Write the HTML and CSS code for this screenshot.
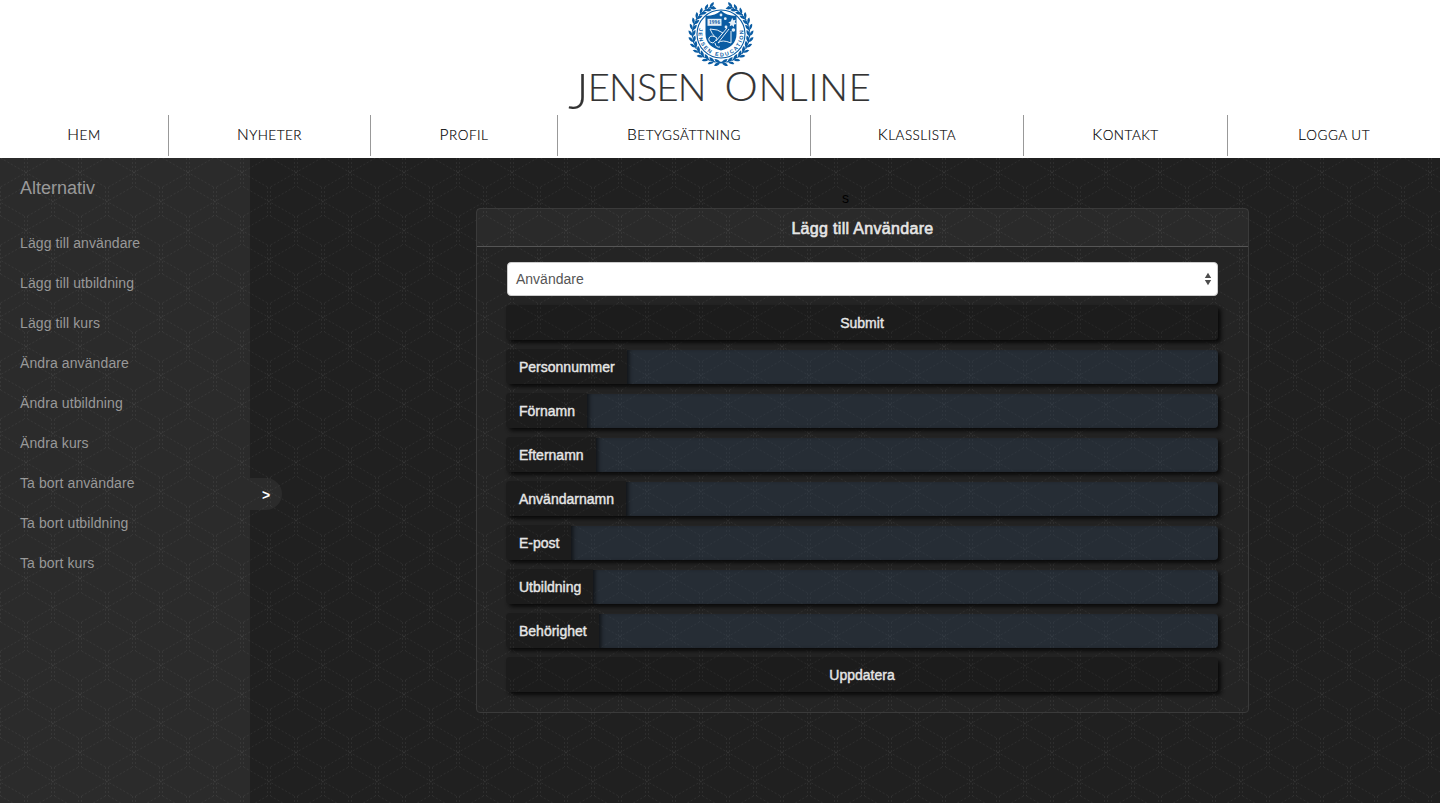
FILE: index.html
```html
<!DOCTYPE html>
<html lang="sv">
<head>
<meta charset="utf-8">
<title>Jensen Online</title>
<link rel="stylesheet" href="styles.css">
</head>
<body>
<header class="top">
  <svg class="logo" viewBox="-33 -33 66 66" width="66" height="66">
    <defs>
      <g id="leaf">
        <path d="M-3 28.6Q1 28 3 28" fill="none" stroke="#0a5ca3" stroke-width="1.3"/>
        <path d="M-1.6 28.6Q-.6 32.2 4 32.5Q3.8 28.8-1.6 28.6Z"/>
        <path d="M-1.6 28.6Q-.4 25 4.4 25.4Q3.4 29-1.6 28.6Z"/>
      </g>
      <g id="branch">
        <use href="#leaf" transform="rotate(-5)"/><use href="#leaf" transform="rotate(-17)"/>
        <use href="#leaf" transform="rotate(-29)"/><use href="#leaf" transform="rotate(-41)"/>
        <use href="#leaf" transform="rotate(-53)"/><use href="#leaf" transform="rotate(-65)"/>
        <use href="#leaf" transform="rotate(-77)"/><use href="#leaf" transform="rotate(-89)"/>
        <use href="#leaf" transform="rotate(-101)"/><use href="#leaf" transform="rotate(-113)"/>
        <use href="#leaf" transform="rotate(-125)"/><use href="#leaf" transform="rotate(-137)"/>
        <use href="#leaf" transform="rotate(-149)"/><use href="#leaf" transform="rotate(-160)"/>
      </g>
      <path id="arc" d="M-21.6-6A22.4 22.4 0 1 0 21.6-6"/>
    </defs>
    <g fill="#0a5ca3">
      <use href="#branch"/>
      <use href="#branch" transform="scale(-1 1)"/>
      <circle r="24" fill="#fff" stroke="#0a5ca3" stroke-width="1.1"/>
      <path d="M0-23.5Q-5-18.5-15.5-18V0C-15.5 9-9 14.5 0 16.5C9 14.5 15.5 9 15.5 0V-18Q5-18.5 0-23.5Z"/>
      <text class="seal"><textPath href="#arc" textLength="80">JENSEN EDUCATION</textPath></text>
    </g>
    <path d="M-13.5-15.2H.5V-8.2H-13.5Z" fill="#e6eff7"/>
    <text class="year" x="-12" y="-9.7" textLength="11">1996</text>
    <g fill="#e6eff7">
      <circle cx="0" cy="-19" r="1.4"/><circle cx="4.3" cy="-15.3" r="1.4"/><circle cx="5" cy="-7" r="1.4"/><circle cx="12.4" cy="-4" r="1.8"/>
      <path d="M11.2-16.2l1.1 2.4 2.5-.5-1 2.3 1.8 1.9-2.5.5-.2 2.5-1.9-1.7-2.3 1 .6-2.5-2-1.5 2.5-.7Z"/>
    </g>
    <g fill="none" stroke="#e6eff7" stroke-width="1">
      <path d="M-11-5Q-3-5 2-1M-11-5Q-9 0-6 3M8-5L-3 9M6-6L-5 7M10-3L10 9Q1 5-3 9"/>
      <path d="M-4 4Q-10 0-12 4Q-13 8-8 9Q-5 7-4 4M-6 9Q-5 14-1 13"/>
    </g>
  </svg>
  <h1 class="brand"><span class="word jensen">Jensen</span><span class="word online">Online</span></h1>
  <nav class="nav">
    <a class="tab"><span class="word">Hem</span></a>
    <a class="tab"><span class="word">Nyheter</span></a>
    <a class="tab"><span class="word">Profil</span></a>
    <a class="tab"><span class="word">Betygsättning</span></a>
    <a class="tab"><span class="word">Klasslista</span></a>
    <a class="tab"><span class="word">Kontakt</span></a>
    <a class="tab"><span class="word">Logga ut</span></a>
  </nav>
</header>
<div class="page">
  <aside class="side">
    <h2 class="side-title">Alternativ</h2>
    <a class="side-link">Lägg till användare</a>
    <a class="side-link">Lägg till utbildning</a>
    <a class="side-link">Lägg till kurs</a>
    <a class="side-link">Ändra användare</a>
    <a class="side-link">Ändra utbildning</a>
    <a class="side-link">Ändra kurs</a>
    <a class="side-link">Ta bort användare</a>
    <a class="side-link">Ta bort utbildning</a>
    <a class="side-link">Ta bort kurs</a>
    <span class="toggle">&gt;</span>
  </aside>
  <main class="main">
    <div class="stray">s</div>
    <section class="panel">
      <h3 class="panel-head">Lägg till Användare</h3>
      <form class="panel-body">
        <div class="select">Användare
          <svg width="8" height="14" viewBox="0 0 8 14"><path d="M4 .8L7.2 6H.8ZM4 13.2L.8 8H7.2Z" fill="#4d4d4d"/></svg>
        </div>
        <div class="button">Submit</div>
        <div class="row"><label class="label">Personnummer</label><div class="field"></div></div>
        <div class="row"><label class="label">Förnamn</label><div class="field"></div></div>
        <div class="row"><label class="label">Efternamn</label><div class="field"></div></div>
        <div class="row"><label class="label">Användarnamn</label><div class="field"></div></div>
        <div class="row"><label class="label">E-post</label><div class="field"></div></div>
        <div class="row"><label class="label">Utbildning</label><div class="field"></div></div>
        <div class="row"><label class="label">Behörighet</label><div class="field"></div></div>
        <div class="button">Uppdatera</div>
      </form>
    </section>
  </main>
</div>
</body>
</html>
```
FILE: styles.css
```css
* { box-sizing: border-box; }
body {
  margin: 0;
  height: 803px;
  overflow: hidden;
  display: flex;
  flex-direction: column;
  font: 14px/20px "Liberation Sans", Arial, sans-serif;
  background-color: #202020;
  background-image: url("data:image/svg+xml,%3Csvg xmlns='http://www.w3.org/2000/svg' width='54' height='58'%3E%3Cg fill='none' stroke='%23fff' stroke-opacity='.058' stroke-dasharray='2 2'%3E%3Cpath d='M25.5 0V29M28.5 0V29M1.5 29V58M52.5 29V58M1.5 0L52.5 29M1.5 29L52.5 0M28.5 29L54 43.5M28.5 58L54 43.5M25.5 29L0 43.5M25.5 58L0 43.5'/%3E%3C/g%3E%3C/svg%3E");
  background-position: 26px 13px;
}
.top {
  height: 158px;
  background: #fff;
  display: flex;
  flex-direction: column;
  align-items: center;
}
.logo { display: block; margin-top: 1px; margin-left: 1px; flex: none; }
.seal { font: bold 5.4px "Liberation Sans", Arial, sans-serif; }
.year { font: bold 5.2px "Liberation Serif", serif; fill: #0a5ca3; }
.word { display: inline-block; text-transform: uppercase; white-space: nowrap; }
.brand {
  margin: 0;
  height: 48px;
  padding-top: 1px;
  display: flex;
  gap: 19px;
  font: 300 38px/37px Lato, sans-serif;
  color: #333;
  -webkit-text-stroke: .2px #333;
}
.brand .word { height: 37px; }
.jensen { letter-spacing: -.8px; }
.online { letter-spacing: .9px; }
.jensen::first-letter { font-size: 49px; line-height: 20px; vertical-align: -8px; }
.online::first-letter { font-size: 42px; line-height: 20px; }
.nav {
  width: 1440px;
  height: 41px;
  display: grid;
  grid-template-columns: 169px 202px 187px 253px 213px 204px 212px;
}
.tab {
  display: flex;
  align-items: center;
  justify-content: center;
  padding-bottom: 2px;
  border-right: 1px solid #999;
  font: 300 13.5px/20px Lato, sans-serif;
  letter-spacing: .5px;
  color: #000;
  -webkit-text-stroke: .15px #000;
}
.tab:last-child { border-right: 0; }
.tab .word::first-letter { font-size: 15.5px; }
.page { flex: 1; display: flex; }
.side {
  position: relative;
  width: 250px;
  padding: 20px;
  display: flex;
  flex-direction: column;
  gap: 20px;
  background: rgba(255, 255, 255, .05);
  color: #999;
}
.side-title { margin: 0 0 15px; font-size: 18px; font-weight: 400; line-height: 20px; }
.side-link { height: 20px; letter-spacing: .1px; }
.toggle {
  position: absolute;
  left: 250px;
  top: 320px;
  width: 32px;
  height: 32px;
  border-radius: 0 16px 16px 0;
  background: rgba(255, 255, 255, .05);
  color: #fff;
  font-weight: 700;
  line-height: 34px;
  text-align: center;
}
.main { flex: 1; padding: 30px 191px 0 226px; }
.stray { height: 20px; padding-left: 366px; color: #000; line-height: 21px; }
.panel {
  height: 505px;
  border: 1px solid #3a3a3a;
  border-radius: 4px;
  background: rgba(255, 255, 255, .02);
}
.panel-head {
  margin: 0;
  height: 38px;
  border-bottom: 1px solid #555;
  background: rgba(255, 255, 255, .03);
  color: #e6e6e6;
  font-size: 16px;
  font-weight: 400;
  letter-spacing: .32px;
  line-height: 39px;
  text-align: center;
  -webkit-text-stroke: .6px #e6e6e6;
}
.panel-body { padding: 15px 29px; display: flex; flex-direction: column; gap: 9px; }
.select {
  height: 34px;
  margin: 0 1px;
  padding: 0 5px 0 8px;
  display: flex;
  align-items: center;
  justify-content: space-between;
  border: 1px solid #ccc;
  border-radius: 4px;
  background: #fff;
  color: #555;
}
.button, .row {
  height: 35px;
  margin-right: 1px;
  border-radius: 4px;
  box-shadow: 3px 3px 4px #0a0a0a;
  color: #e6e6e6;
}
.button, .label {
  background: rgba(0, 0, 0, .2);
  line-height: 36px;
  text-align: center;
  -webkit-text-stroke: .4px #e6e6e6;
}
.row { display: flex; }
.label { padding: 0 12px 0 13px; border-radius: 4px 0 0 4px; }
.field {
  flex: 1;
  margin-top: 1px;
  border-radius: 0 4px 4px 0;
  background: rgba(43, 61, 81, .4);
  box-shadow: inset 4px 0 4px -2px rgba(0, 0, 0, .6);
}
```
